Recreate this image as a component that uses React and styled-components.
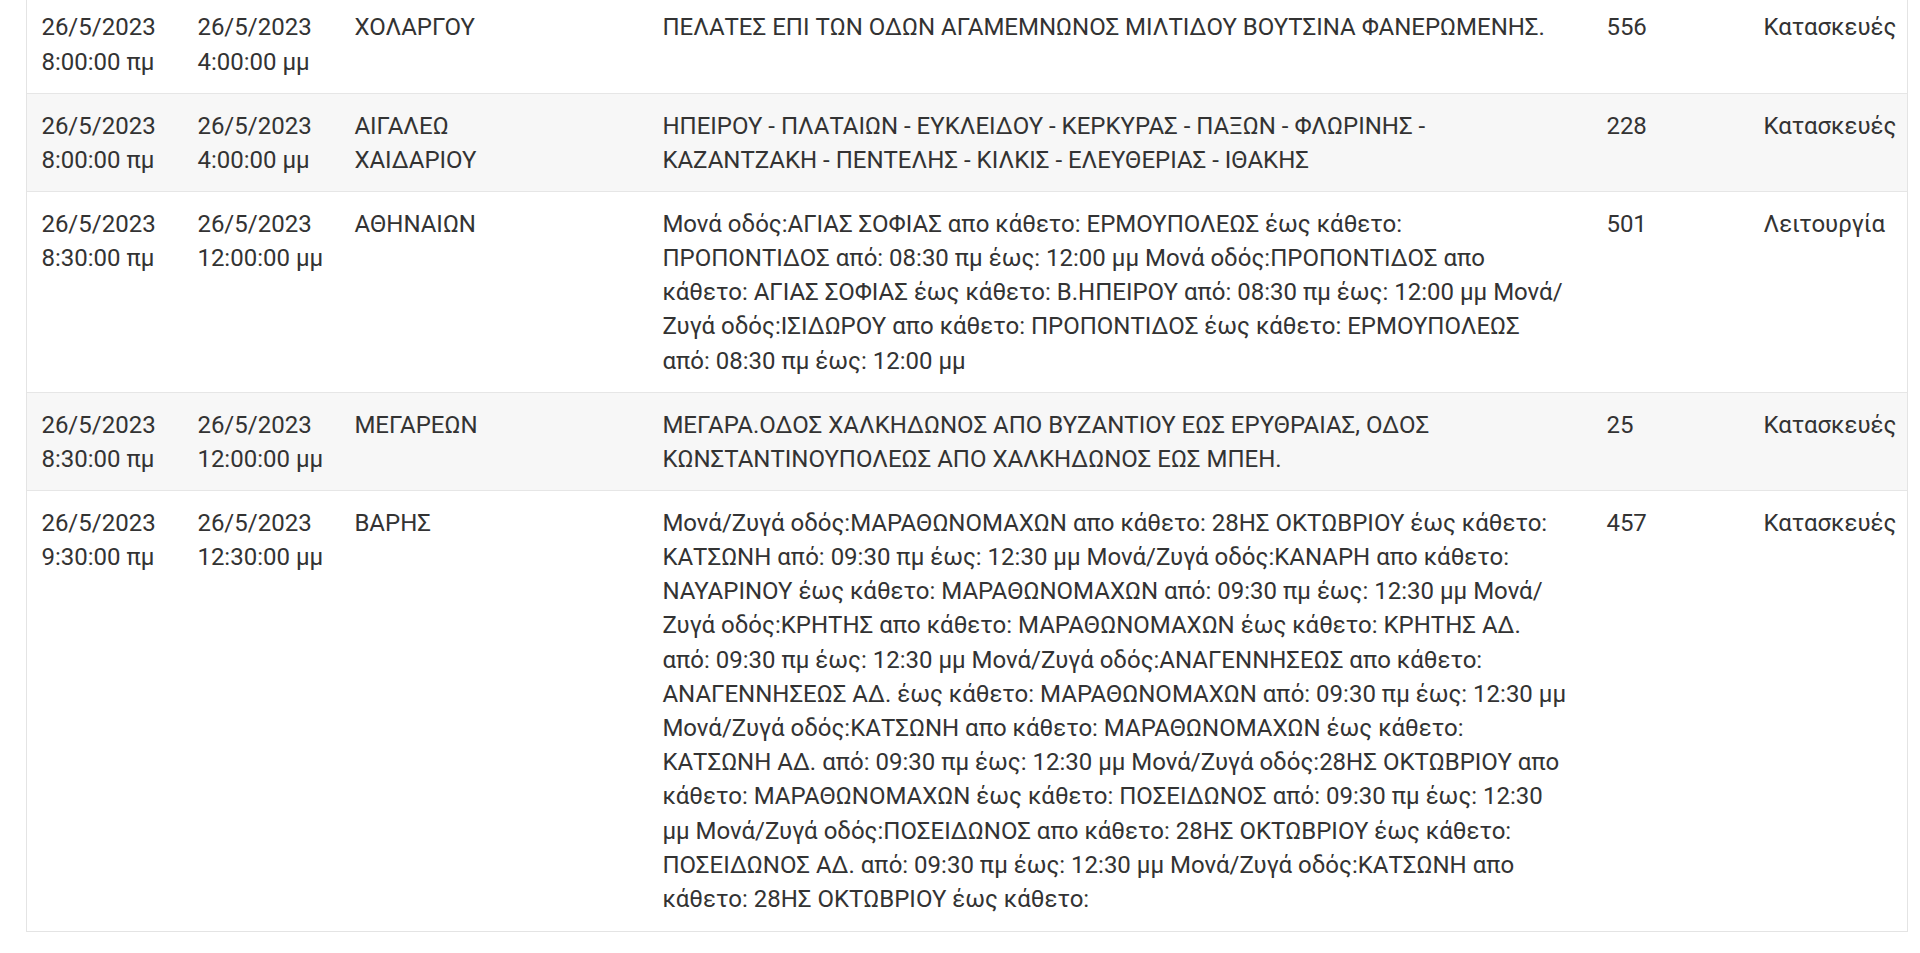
import styled, { createGlobalStyle } from 'styled-components';

const GlobalStyle = createGlobalStyle`
    html, body {
        margin: 0;
        padding: 0;
        background: #ffffff;
    }
    body {
        font-family: Roboto, "Noto Sans", "Liberation Sans", sans-serif;
        overflow: hidden;
    }
`;

// the street lists come pre-broken, one entry per printed line
const rows = [
    {
        from: '26/5/2023 8:00:00 πμ',
        to: '26/5/2023 4:00:00 μμ',
        area: 'ΧΟΛΑΡΓΟΥ',
        streets: [
            'ΠΕΛΑΤΕΣ ΕΠΙ ΤΩΝ ΟΔΩΝ ΑΓΑΜΕΜΝΩΝΟΣ ΜΙΛΤΙΔΟΥ ΒΟΥΤΣΙΝΑ ΦΑΝΕΡΩΜΕΝΗΣ.',
        ],
        code: '556',
        kind: 'Κατασκευές',
    },
    {
        from: '26/5/2023 8:00:00 πμ',
        to: '26/5/2023 4:00:00 μμ',
        area: 'ΑΙΓΑΛΕΩ ΧΑΙΔΑΡΙΟΥ',
        streets: [
            'ΗΠΕΙΡΟΥ - ΠΛΑΤΑΙΩΝ - ΕΥΚΛΕΙΔΟΥ - ΚΕΡΚΥΡΑΣ - ΠΑΞΩΝ - ΦΛΩΡΙΝΗΣ -',
            'ΚΑΖΑΝΤΖΑΚΗ - ΠΕΝΤΕΛΗΣ - ΚΙΛΚΙΣ - ΕΛΕΥΘΕΡΙΑΣ - ΙΘΑΚΗΣ',
        ],
        code: '228',
        kind: 'Κατασκευές',
    },
    {
        from: '26/5/2023 8:30:00 πμ',
        to: '26/5/2023 12:00:00 μμ',
        area: 'ΑΘΗΝΑΙΩΝ',
        streets: [
            'Μονά οδός:ΑΓΙΑΣ ΣΟΦΙΑΣ απο κάθετο: ΕΡΜΟΥΠΟΛΕΩΣ έως κάθετο:',
            'ΠΡΟΠΟΝΤΙΔΟΣ από: 08:30 πμ έως: 12:00 μμ Μονά οδός:ΠΡΟΠΟΝΤΙΔΟΣ απο',
            'κάθετο: ΑΓΙΑΣ ΣΟΦΙΑΣ έως κάθετο: Β.ΗΠΕΙΡΟΥ από: 08:30 πμ έως: 12:00 μμ Μονά/',
            'Ζυγά οδός:ΙΣΙΔΩΡΟΥ απο κάθετο: ΠΡΟΠΟΝΤΙΔΟΣ έως κάθετο: ΕΡΜΟΥΠΟΛΕΩΣ',
            'από: 08:30 πμ έως: 12:00 μμ',
        ],
        code: '501',
        kind: 'Λειτουργία',
    },
    {
        from: '26/5/2023 8:30:00 πμ',
        to: '26/5/2023 12:00:00 μμ',
        area: 'ΜΕΓΑΡΕΩΝ',
        streets: [
            'ΜΕΓΑΡΑ.ΟΔΟΣ ΧΑΛΚΗΔΩΝΟΣ ΑΠΟ ΒΥΖΑΝΤΙΟΥ ΕΩΣ ΕΡΥΘΡΑΙΑΣ, ΟΔΟΣ',
            'ΚΩΝΣΤΑΝΤΙΝΟΥΠΟΛΕΩΣ ΑΠΟ ΧΑΛΚΗΔΩΝΟΣ ΕΩΣ ΜΠΕΗ.',
        ],
        code: '25',
        kind: 'Κατασκευές',
    },
    {
        from: '26/5/2023 9:30:00 πμ',
        to: '26/5/2023 12:30:00 μμ',
        area: 'ΒΑΡΗΣ',
        streets: [
            'Μονά/Ζυγά οδός:ΜΑΡΑΘΩΝΟΜΑΧΩΝ απο κάθετο: 28ΗΣ ΟΚΤΩΒΡΙΟΥ έως κάθετο:',
            'ΚΑΤΣΩΝΗ από: 09:30 πμ έως: 12:30 μμ Μονά/Ζυγά οδός:ΚΑΝΑΡΗ απο κάθετο:',
            'ΝΑΥΑΡΙΝΟΥ έως κάθετο: ΜΑΡΑΘΩΝΟΜΑΧΩΝ από: 09:30 πμ έως: 12:30 μμ Μονά/',
            'Ζυγά οδός:ΚΡΗΤΗΣ απο κάθετο: ΜΑΡΑΘΩΝΟΜΑΧΩΝ έως κάθετο: ΚΡΗΤΗΣ ΑΔ.',
            'από: 09:30 πμ έως: 12:30 μμ Μονά/Ζυγά οδός:ΑΝΑΓΕΝΝΗΣΕΩΣ απο κάθετο:',
            'ΑΝΑΓΕΝΝΗΣΕΩΣ ΑΔ. έως κάθετο: ΜΑΡΑΘΩΝΟΜΑΧΩΝ από: 09:30 πμ έως: 12:30 μμ',
            'Μονά/Ζυγά οδός:ΚΑΤΣΩΝΗ απο κάθετο: ΜΑΡΑΘΩΝΟΜΑΧΩΝ έως κάθετο:',
            'ΚΑΤΣΩΝΗ ΑΔ. από: 09:30 πμ έως: 12:30 μμ Μονά/Ζυγά οδός:28ΗΣ ΟΚΤΩΒΡΙΟΥ απο',
            'κάθετο: ΜΑΡΑΘΩΝΟΜΑΧΩΝ έως κάθετο: ΠΟΣΕΙΔΩΝΟΣ από: 09:30 πμ έως: 12:30',
            'μμ Μονά/Ζυγά οδός:ΠΟΣΕΙΔΩΝΟΣ απο κάθετο: 28ΗΣ ΟΚΤΩΒΡΙΟΥ έως κάθετο:',
            'ΠΟΣΕΙΔΩΝΟΣ ΑΔ. από: 09:30 πμ έως: 12:30 μμ Μονά/Ζυγά οδός:ΚΑΤΣΩΝΗ απο',
            'κάθετο: 28ΗΣ ΟΚΤΩΒΡΙΟΥ έως κάθετο:',
        ],
        code: '457',
        kind: 'Κατασκευές',
    },
];

// widths of the columns, the empty one sits between area and streets
const columns = [156, 157, 157, 151, 944, 157, 158];

const App = () => {
    return (
        <Page>
            <GlobalStyle />
            <TableBox>
                <Table>
                    <colgroup>
                        {columns.map((w, i) => <col key={i} style={{ width: w }} />)}
                    </colgroup>
                    <tbody>
                        {rows.map((row, i) => (
                            <Row key={i} $striped={i % 2 === 1}>
                                <Cell>{row.from}</Cell>
                                <Cell>{row.to}</Cell>
                                <Cell>{row.area}</Cell>
                                <Cell></Cell>
                                <Cell $lines>{row.streets.join('\n')}</Cell>
                                <Cell>{row.code}</Cell>
                                <Cell $nowrap>{row.kind}</Cell>
                            </Row>
                        ))}
                    </tbody>
                </Table>
            </TableBox>
        </Page>
    );
}

const Page = styled.div`
    padding: 0 12px 0 26px;
    margin-top: -5px;
`;

const TableBox = styled.div`
    width: 1882px;
    box-sizing: border-box;
    border: 1px solid #e4e4e4;
    border-top: none;
    background: #ffffff;
`;

const Table = styled.table`
    width: 100%;
    table-layout: fixed;
    border-collapse: collapse;
    border-spacing: 0;
`;

const Row = styled.tr`
    background: ${props => props.$striped ? '#f7f7f7' : '#ffffff'};
`;

const Cell = styled.td`
    vertical-align: top;
    padding: 14.4px;
    border-top: 1px solid #e6e6e6;
    font-family: Roboto, "Noto Sans", sans-serif;
    font-size: 24px;
    line-height: 34.2px;
    color: #333333;
    text-align: left;
    white-space: ${props => props.$lines ? 'pre' : props.$nowrap ? 'nowrap' : 'normal'};
`;

export default App;
